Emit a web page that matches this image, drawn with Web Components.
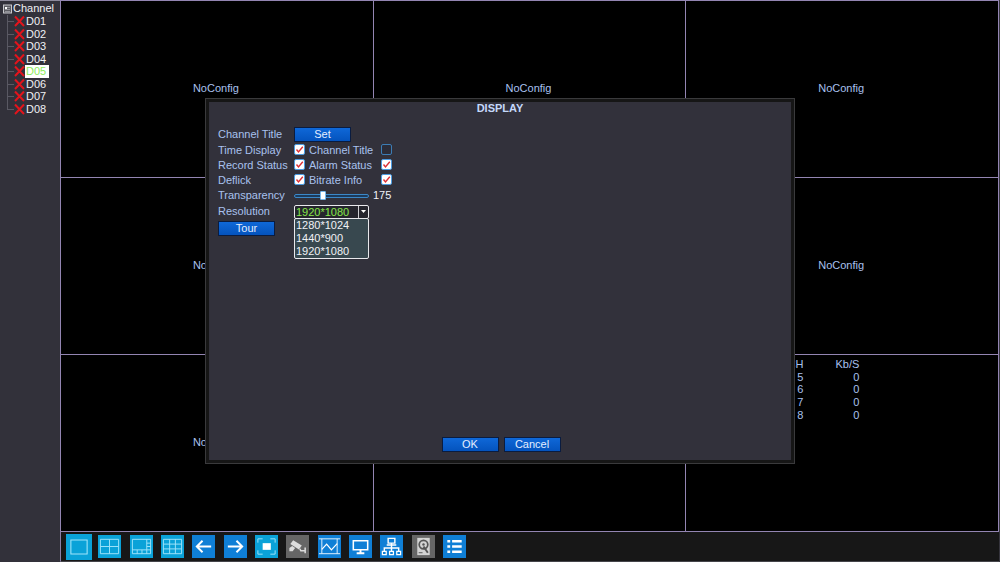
<!DOCTYPE html>
<html lang="en">
<head>
<meta charset="utf-8">
<title>NVR Display Settings</title>
<style>
  html, body { margin: 0; height: 100%; background: #000; }
  body { font: 11px/13px "Liberation Sans", Arial, sans-serif; color: #a9c1ee; overflow: hidden; }
</style>
</head>
<body>
<nvr-screen>
  <channel-tree slot="side" label="Channel">
    <channel-node>D01</channel-node>
    <channel-node>D02</channel-node>
    <channel-node>D03</channel-node>
    <channel-node>D04</channel-node>
    <channel-node selected>D05</channel-node>
    <channel-node>D06</channel-node>
    <channel-node>D07</channel-node>
    <channel-node>D08</channel-node>
  </channel-tree>
  <video-wall slot="wall">
    <video-cell>NoConfig</video-cell>
    <video-cell>NoConfig</video-cell>
    <video-cell>NoConfig</video-cell>
    <video-cell>NoConfig</video-cell>
    <video-cell></video-cell>
    <video-cell>NoConfig</video-cell>
    <video-cell>NoConfig</video-cell>
    <video-cell></video-cell>
    <video-cell align="top"><bitrate-table></bitrate-table></video-cell>
  </video-wall>
  <tool-bar slot="tools">
    <tool-button icon="one" tone="cyan" active label="Single view"></tool-button>
    <tool-button icon="four" tone="cyan" label="Four views"></tool-button>
    <tool-button icon="eight" tone="cyan" label="Eight views"></tool-button>
    <tool-button icon="nine" tone="cyan" label="Nine views"></tool-button>
    <tool-button icon="prev" label="Previous"></tool-button>
    <tool-button icon="next" label="Next"></tool-button>
    <tool-button icon="full" tone="cyan" label="Full screen"></tool-button>
    <tool-button icon="camera" tone="gray" label="PTZ"></tool-button>
    <tool-button icon="color" label="Color"></tool-button>
    <tool-button icon="monitor" label="Output"></tool-button>
    <tool-button icon="network" label="Network"></tool-button>
    <tool-button icon="disk" tone="gray" label="Disk"></tool-button>
    <tool-button icon="menu" label="Main menu"></tool-button>
  </tool-bar>
  <display-dialog slot="dialog"></display-dialog>
</nvr-screen>

<script>
function define(name, markup, setup) {
  const template = document.createElement('template');
  template.innerHTML = markup;
  customElements.define(name, class extends HTMLElement {
    constructor() {
      super();
      this.attachShadow({ mode: 'open' }).append(template.content.cloneNode(true));
    }
    connectedCallback() {
      if (setup) setup(this, this.shadowRoot);
    }
  });
}

define('nvr-screen', `
  <style>
    :host { display: grid; grid-template: 1fr 30px / 60px 1fr; height: 100vh; position: relative;
            box-sizing: border-box; padding-right: 1px; background: #35343c; }
    aside { grid-row: 1 / 3; display: grid; }
    main, footer { display: grid; min-width: 0; }
    .layer { position: absolute; inset: 0; display: grid; place-items: center; pointer-events: none; }
  </style>
  <aside><slot name="side"></slot></aside>
  <main><slot name="wall"></slot></main>
  <footer><slot name="tools"></slot></footer>
  <div class="layer"><slot name="dialog"></slot></div>
`);

define('channel-tree', `
  <style>
    :host { display: block; background: #32313a; color: #f0f0f4; border-top: 1px solid #8d8a9c; padding: 1px 0 0 2px; }
    header { display: flex; align-items: center; gap: 1px; height: 13px; }
    .nodes { display: flex; flex-direction: column; height: 100px; }
  </style>
  <header>
    <svg width="10" height="10" viewBox="0 0 10 10" aria-hidden="true">
      <rect x="1.5" y="1" width="8" height="8" fill="#5c5c62" stroke="#c8c8cc"/>
      <rect x="3" y="3" width="2" height="2" fill="#fff"/><path d="M5 3.5h3M3 5.5h5M3 7.5h5" stroke="#94949a"/>
    </svg>
    <span id="label"></span>
  </header>
  <div class="nodes" role="tree"><slot></slot></div>
`, (host, root) => { root.getElementById('label').textContent = host.getAttribute('label'); });

define('channel-node', `
  <style>
    :host { flex: 1; display: flex; align-items: stretch; line-height: 12px; }
    i { width: 7px; margin-left: 5px;
        background: linear-gradient(#5a5963, #5a5963) 0 0 / 1px 100% no-repeat,
                    linear-gradient(#5a5963, #5a5963) 0 6px / 7px 1px no-repeat; }
    :host(:last-child) i { background-size: 1px 6px, 7px 1px; }
    svg { width: 11px; height: 12px; }
    span { width: 23px; padding-left: 1px; }
    :host([selected]) span { background: #fff; color: #8cec5c; }
  </style>
  <i></i>
  <svg viewBox="0 0 11 12" aria-hidden="true"><path d="M1 1.500 10 11M10 1.500 1 11" stroke="#e2141c" stroke-width="2"/></svg>
  <span><slot></slot></span>
`);

define('video-wall', `
  <style>
    :host { display: grid; grid-template: repeat(3, minmax(0, 1fr)) / repeat(3, minmax(0, 1fr));
            gap: 1px; padding: 1px; background: #9385b2; }
  </style>
  <slot></slot>
`);

define('video-cell', `
  <style>
    :host { display: grid; place-items: center; background: #000; overflow: hidden; padding: 0 2px 2px 0; }
    :host([align="top"]) { place-items: start; }
  </style>
  <slot></slot>
`);

define('bitrate-table', `
  <style>
    :host { display: block; padding: 3px 0 0 87px; }
    table { border-collapse: collapse; text-align: right; height: 63px; }
    th, td { padding: 0; font-weight: normal; line-height: 12px; text-align: right; }
    th:first-child { width: 30px; }
    th:last-child { width: 56px; }
  </style>
  <table>
    <tr><th>CH</th><th>Kb/S</th></tr>
    <tr><td>5</td><td>0</td></tr>
    <tr><td>6</td><td>0</td></tr>
    <tr><td>7</td><td>0</td></tr>
    <tr><td>8</td><td>0</td></tr>
  </table>
`);

define('tool-bar', `
  <style>
    :host { display: block; background: #171717; border-left: 1px solid #8b7fa6; border-bottom: 1px solid #45454a; }
    nav { display: grid; grid-template-columns: repeat(13, 1fr); width: 407px; height: 100%; margin-left: 2px; place-items: center; }
  </style>
  <nav><slot></slot></nav>
`);

const toolIcons = {
  one: '<path d="M4.5 5.5h15v13h-15z"/>',
  four: '<path d="M2.5 4.5h19v15h-19zM12 4.5v15M2.5 12h19"/>',
  eight: '<path d="M2.5 4.5h19v15h-19zM17.5 4.5v15M2.5 15.5h19M17.5 8.5h4M17.5 12h4M7.5 15.5v4M12.5 15.5v4"/>',
  nine: '<path d="M2.5 4.5h19v15h-19zM9 4.5v15M15 4.5v15M2.5 9.5h19M2.5 14.5h19"/>',
  prev: '<path stroke="#fff" stroke-width="2" d="M20 12H5M11 6l-6 6 6 6"/>',
  next: '<path stroke="#fff" stroke-width="2" d="M4 12h15M13 6l6 6-6 6"/>',
  full: '<path d="M3 8V4h5M16 4h5v4M21 16v4h-5M8 20H3v-4"/><path fill="#fff" stroke="none" d="M8 8.5h8.500v7H8z"/>',
  camera: '<g fill="#dcdcdc" stroke="none"><path d="M7.500 5.500 16.500 11l-3 4L4.500 9.500zM3.500 13.500l3-2 3 2-2.500 3.500H3.500z"/></g><path stroke="#dcdcdc" stroke-width="1.600" d="M14.500 14.500l1 2h4M20 13v6"/>',
  color: '<path stroke="#e6f4ff" d="M1 4h22M4 4v15.500M20 4v15.500M1 19.500h22"/><path stroke="#fff" stroke-width="1.300" d="M4 15l5-5.500 5 6 6-6.500"/>',
  monitor: '<path stroke="#fff" stroke-width="1.600" d="M4.500 6h15v9.500h-15z"/><path stroke="#fff" stroke-width="2" d="M12 15.500v3M8 19h8"/>',
  network: '<path stroke="#fff" stroke-width="1.500" d="M8.500 3.500h7v5h-7zM12 8.500V17M7 10.500h10M4.500 17v-3.500h15V17"/><path stroke="#fff" stroke-width="1.300" d="M2.500 17h4v3.500h-4zM10 17h4v3.500h-4zM17.500 17h4v3.500h-4z"/>',
  disk: '<path fill="#d4d4d4" stroke="none" d="M5.500 3h13v18h-13z"/><circle cx="12" cy="10" r="4.500" stroke="#555" stroke-width="1.800"/><circle cx="12" cy="10" r="1.300" fill="#555" stroke="none"/><path stroke="#555" stroke-width="2" d="M12 12l4.500 6.500"/><path stroke="#555" d="M7 18.500h4"/>',
  menu: '<path stroke="#fff" stroke-width="2.400" d="M4.500 6.500h3M9.500 6.500h10M4.500 12h3M9.500 12h10M4.500 17.500h3M9.500 17.500h10"/>'
};

define('tool-button', `
  <style>
    :host { display: block; --tile: #0f7fd6; }
    :host([tone="cyan"]) { --tile: #0aa2d8; }
    :host([tone="gray"]) { --tile: #666; }
    button { display: grid; width: 23px; height: 23px; padding: 0; border: 0; background: var(--tile); }
    :host([active]) button { width: 26px; height: 26px; }
    svg { width: 100%; height: 100%; fill: none; stroke: #9fe4fa; }
  </style>
  <button type="button"><svg viewBox="0 0 24 24" aria-hidden="true"></svg></button>
`, (host, root) => {
  root.querySelector('svg').innerHTML = toolIcons[host.getAttribute('icon')];
  root.querySelector('button').setAttribute('aria-label', host.getAttribute('label'));
});

define('push-button', `
  <style>
    :host { display: block; width: 57px; }
    button { display: block; width: 100%; height: 15px; padding: 0; border: 1px solid #0a1c40;
             background: linear-gradient(#0f68d8, #0453bd); color: #e4eeff; font: inherit; line-height: 13px; }
  </style>
  <button type="button"><slot></slot></button>
`);

define('check-field', `
  <style>
    :host { display: block; }
    label { display: flex; align-items: center; justify-content: space-between; }
    input { appearance: none; box-sizing: border-box; width: 11px; height: 11px; margin: 0;
            border: 1px solid #3c7cb4; border-radius: 2px; background: #2b2c38; }
    input:checked { border-color: #4c9be0; background: #fff; }
    .box { display: grid; padding-bottom: 2px; }
    .box > * { grid-area: 1 / 1; }
    svg { width: 11px; height: 11px; fill: none; stroke: #dc2f35; stroke-width: 1.4; pointer-events: none; }
    input:not(:checked) + svg { visibility: hidden; }
  </style>
  <label><slot></slot><span class="box"><input type="checkbox"><svg viewBox="0 0 11 11" aria-hidden="true"><path d="M2.500 5.500l2 2.500 4.300-5.200"/></svg></span></label>
`, (host, root) => { root.querySelector('input').checked = host.hasAttribute('checked'); });

define('range-field', `
  <style>
    :host { display: contents; }
    .control { display: flex; align-items: center; gap: 4px; grid-column: 2 / 5; }
    input { appearance: none; width: 75px; height: 11px; margin: 0; background: none; }
    input::-webkit-slider-runnable-track { height: 4px; box-sizing: border-box; background: #1c3a5a; border: 1px solid #3b88c8; border-radius: 2px; }
    input::-webkit-slider-thumb { appearance: none; width: 6px; height: 9px; margin-top: -4px; background: #fff; border: 1px solid #78b8ec; border-radius: 1px; box-sizing: border-box; }
    output { color: #f0f2fa; }
  </style>
  <label for="range"><slot></slot></label>
  <span class="control"><input id="range" type="range" min="128" max="255" value="175"><output for="range">175</output></span>
`);

define('resolution-field', `
  <style>
    :host { display: contents; }
    .control { position: relative; grid-column: 2 / 5; width: 75px; }
    select { appearance: none; display: block; box-sizing: border-box; width: 100%; height: 14px; margin: 0; padding: 0 0 0 1px;
             border: 1px solid #e8e8ec; border-radius: 2px; color: #86e64a; font: inherit; line-height: 12px;
             background: linear-gradient(#d0d0d4, #d0d0d4) 63px 0 / 1px 100% no-repeat, #25252d; }
    svg { position: absolute; right: 2px; top: 5px; width: 7px; height: 4px; pointer-events: none; }
    ul { position: absolute; top: 100%; left: 0; right: 0; margin: -1px 0 0; padding: 0 0 0 1px; list-style: none;
         background: #38484f; border: 1px solid #e8e8ec; border-radius: 2px; color: #f0f2f6; }
    li { line-height: 13px; }
  </style>
  <label for="resolution"><slot></slot></label>
  <span class="control">
    <select id="resolution"><option>1920*1080</option></select>
    <svg viewBox="0 0 7 4" aria-hidden="true"><path d="M1 0h5L3.500 3z" fill="#fff"/></svg>
    <ul role="listbox" aria-label="Resolution">
      <li role="option">1280*1024</li>
      <li role="option">1440*900</li>
      <li role="option" aria-selected="true">1920*1080</li>
    </ul>
  </span>
`);

define('display-dialog', `
  <style>
    :host { display: block; width: 59%; height: 65%; box-sizing: border-box; border: 1px solid #3a3a3c; pointer-events: auto; }
    section { display: flex; flex-direction: column; height: 100%; box-sizing: border-box;
              border: 3px solid #161616; background: #32313b; }
    h1 { margin: 0; font-size: 11px; line-height: 12px; text-align: center; color: #c4d8fa; }
    form { flex: 1; display: grid; grid-template: 17px repeat(4, 15px) 17px 17px / 76px 11px 4px 83px;
           align-content: start; align-items: center; padding: 12px 9px 0; }
    check-field:nth-of-type(odd) { grid-column: 1 / 3; }
    check-field:nth-of-type(even) { grid-column: 4; }
    .wide { grid-column: 2 / 5; }
    .tour { grid-column: 1; }
    footer { display: flex; justify-content: center; gap: 5px; padding: 0 0 8px 2px; }
  </style>
  <section role="dialog" aria-labelledby="title">
    <h1 id="title">DISPLAY</h1>
    <form>
      <span>Channel Title</span><push-button class="wide">Set</push-button>
      <check-field checked>Time Display</check-field><check-field>Channel Title</check-field>
      <check-field checked>Record Status</check-field><check-field checked>Alarm Status</check-field>
      <check-field checked>Deflick</check-field><check-field checked>Bitrate Info</check-field>
      <range-field>Transparency</range-field>
      <resolution-field>Resolution</resolution-field>
      <push-button class="tour">Tour</push-button>
    </form>
    <footer><push-button>OK</push-button><push-button>Cancel</push-button></footer>
  </section>
`);
</script>
</body>
</html>
